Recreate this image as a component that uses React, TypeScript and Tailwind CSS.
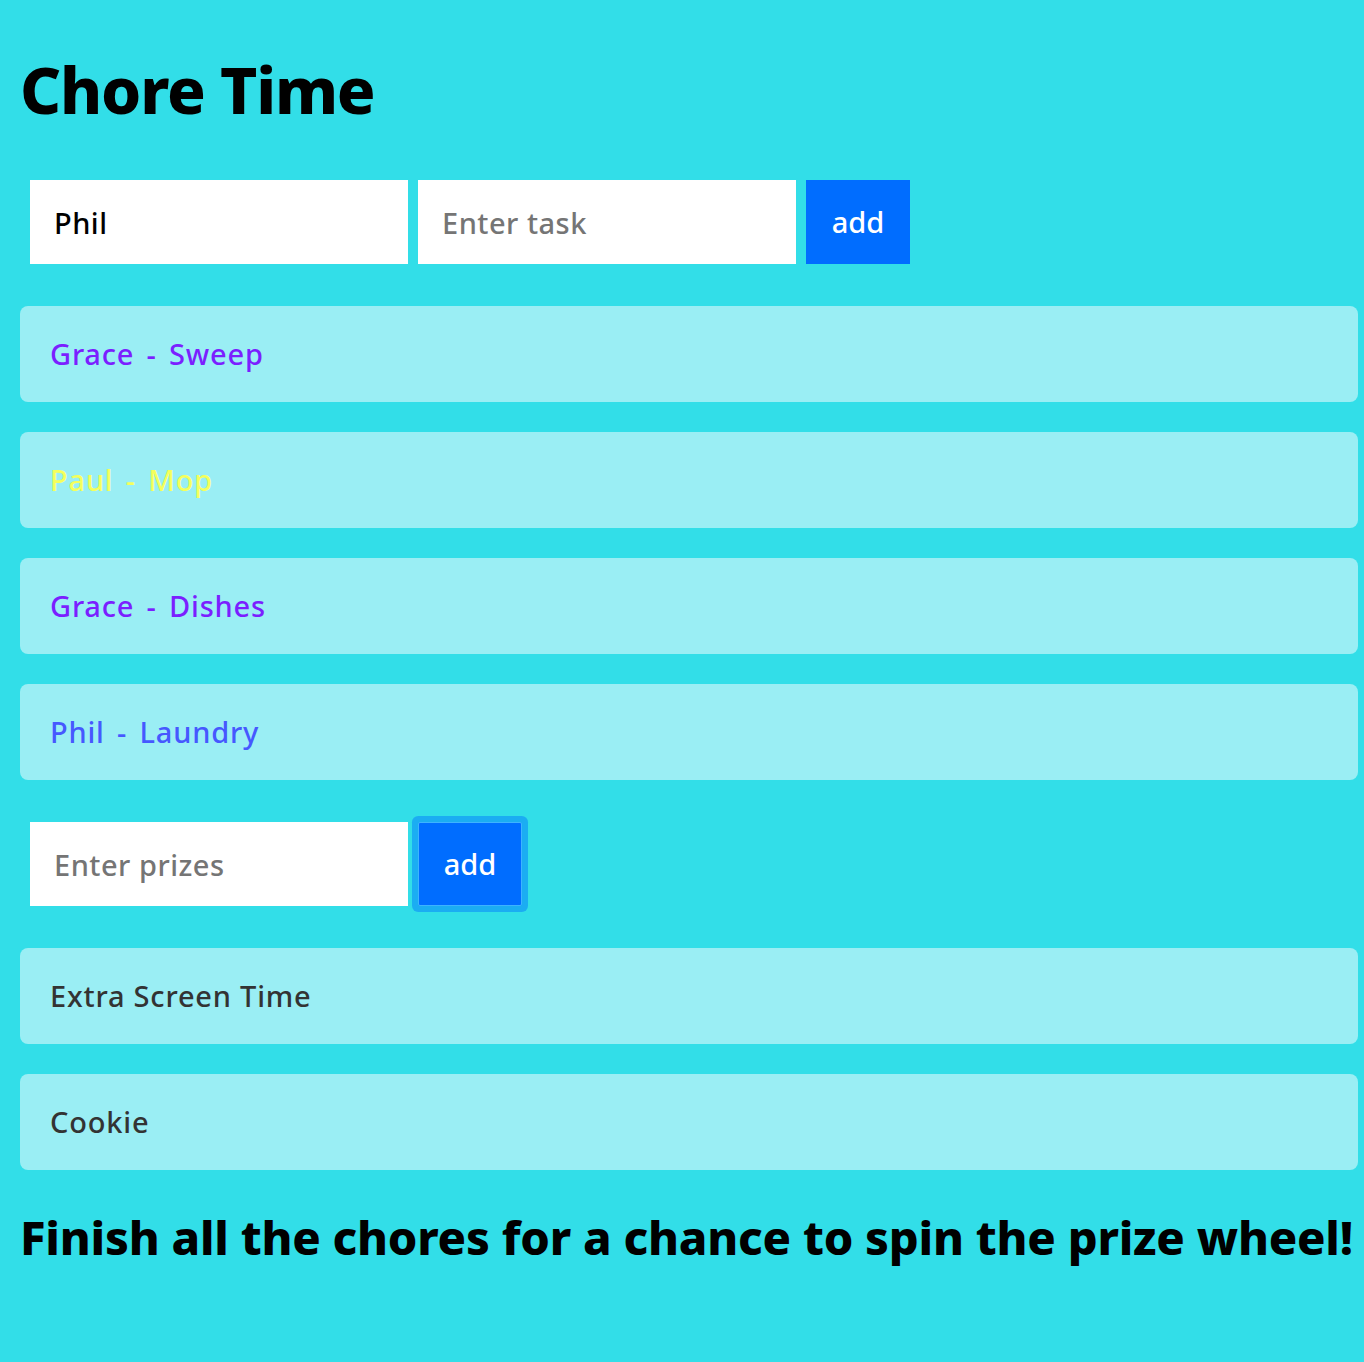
import React from 'react';

const chores = [
  { name: 'Grace', task: 'Sweep', color: 'text-[#7b1fff]' },
  { name: 'Paul', task: 'Mop', color: 'text-[#f4ff5c]' },
  { name: 'Grace', task: 'Dishes', color: 'text-[#7b1fff]' },
  { name: 'Phil', task: 'Laundry', color: 'text-[#4658ff]' },
];

const prizes = ['Extra Screen Time', 'Cookie'];

export default function App() {
  return (
    <div className="min-h-[1362px] bg-[#32dee8] px-5 pt-[40px] pb-10 font-['Noto_Sans',sans-serif]">
      {/* Title */}
      <h1 className="text-[64px] font-extrabold leading-[100px] text-black tracking-[-1.2px]">Chore Time</h1>

      {/* Chore form */}
      <div className="mt-[40px] flex gap-[10px] px-[10px]">
        <input
          className="h-[84px] w-[378px] bg-white px-6 text-[29px] font-medium tracking-[0.5px] text-black outline-none placeholder:text-[#757575]"
          defaultValue="Phil"
        />
        <input
          className="h-[84px] w-[378px] bg-white px-6 text-[29px] font-medium tracking-[0.5px] text-black outline-none placeholder:text-[#757575]"
          placeholder="Enter task"
        />
        <button className="h-[84px] w-[104px] bg-[#006dff] text-[29px] font-medium text-white">add</button>
      </div>

      {/* Chore list */}
      <ul className="mt-[42px] flex w-[1338px] flex-col gap-[30px]">
        {chores.map((c, i) => (
          <li key={i} className={`flex h-[96px] items-center rounded-lg bg-[#9aeef4] px-[30px] text-[29px] font-medium tracking-[0.8px] whitespace-pre [word-spacing:4px] ${c.color}`}>
            {c.name} - {c.task}
          </li>
        ))}
      </ul>

      {/* Prize form */}
      <div className="mt-[42px] flex gap-[10px] px-[10px]">
        <input
          className="h-[84px] w-[378px] bg-white px-6 text-[29px] font-medium tracking-[0.5px] text-black outline-none placeholder:text-[#757575]"
          placeholder="Enter prizes"
        />
        <button className="h-[84px] w-[104px] rounded-[2px] border border-[#3db3ff] bg-[#006dff] text-[29px] font-medium text-white shadow-[0_0_0_6px_rgba(0,112,255,0.45)]">
          add
        </button>
      </div>

      {/* Prize list */}
      <ul className="mt-[42px] flex w-[1338px] flex-col gap-[30px]">
        {prizes.map((p) => (
          <li key={p} className="flex h-[96px] items-center rounded-lg bg-[#9aeef4] px-[30px] text-[29px] font-medium tracking-[0.8px] text-[#333]">
            {p}
          </li>
        ))}
      </ul>

      <h2 className="mt-[37px] whitespace-nowrap text-[47px] font-extrabold leading-[60px] tracking-[-0.2px] text-black">
        Finish all the chores for a chance to spin the prize wheel!
      </h2>
    </div>
  );
}
